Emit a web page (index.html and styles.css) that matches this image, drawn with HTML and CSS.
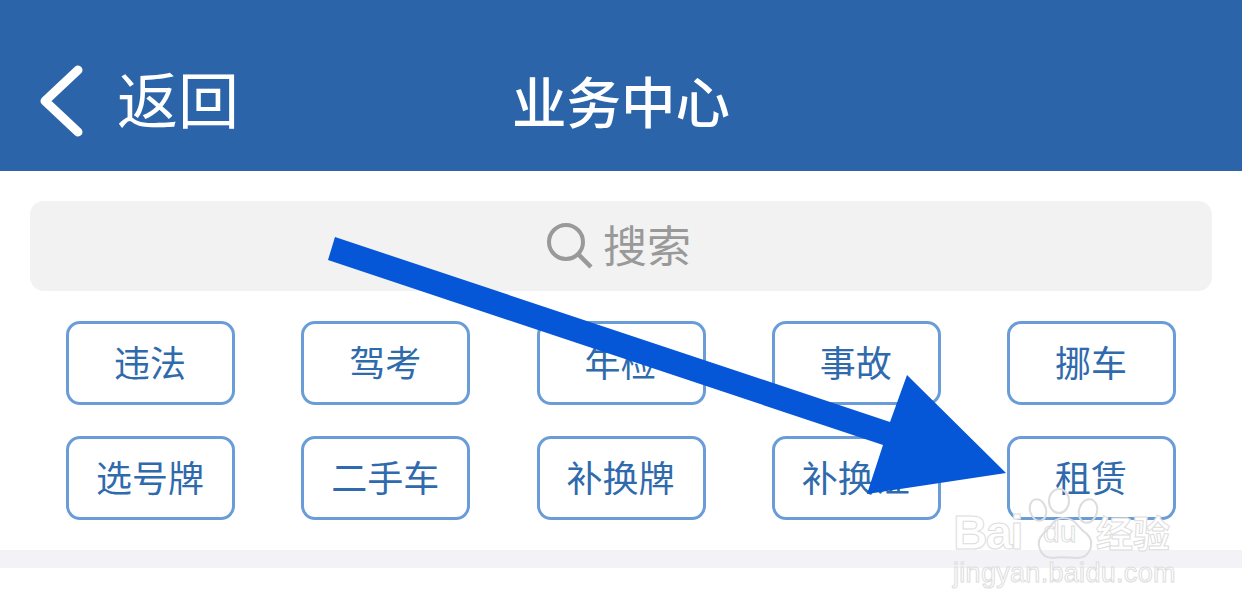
FILE: index.html
```html
<!DOCTYPE html>
<html lang="zh-CN">
<head>
  <meta charset="UTF-8">
  <title>业务中心</title>
  <link rel="stylesheet" href="styles.css">
</head>
<body>
  <div id="page">
    <header class="topbar">
      <div class="back">
        <svg class="back-icon" width="44" height="72" viewBox="0 0 44 72">
          <path d="M38 5 L5 36 L38 67" fill="none" stroke="#fff" stroke-width="9" stroke-linecap="round" stroke-linejoin="round"/>
        </svg>
        <span class="back-text">返回</span>
      </div>
      <h1>业务中心</h1>
    </header>

    <div class="search">
      <svg width="46" height="46" viewBox="0 0 46 46">
        <circle cx="19" cy="19" r="17" fill="none" stroke="#999" stroke-width="4"/>
        <path d="M31 31 L44 44" fill="none" stroke="#999" stroke-width="4.5"/>
      </svg>
      <span class="search-text">搜索</span>
    </div>

    <div class="tags">
      <a class="tag">违法</a>
      <a class="tag">驾考</a>
      <a class="tag">年检</a>
      <a class="tag">事故</a>
      <a class="tag">挪车</a>
      <a class="tag">选号牌</a>
      <a class="tag">二手车</a>
      <a class="tag">补换牌</a>
      <a class="tag">补换证</a>
      <a class="tag">租赁</a>
    </div>

    <div class="divider"></div>

    <!-- annotation drawn over the screenshot -->
    <svg class="arrow" width="1242" height="616" viewBox="0 0 1242 616">
      <polygon points="335,237 328,260 883,445 867,494 1006,473 907,375 890,422" fill="#0656d8"/>
    </svg>

    <div class="watermark">
      <svg class="paw" width="76" height="76" viewBox="0 0 76 76">
        <g fill="none" stroke="#ddd" stroke-width="2">
          <ellipse cx="11" cy="22" rx="8" ry="11" transform="rotate(-15 11 22)"/>
          <ellipse cx="32" cy="13" rx="10" ry="12"/>
          <ellipse cx="61" cy="23" rx="9" ry="12" transform="rotate(15 61 23)"/>
          <path d="M36 30 C50 30 50 40 60 46 C68 54 64 70 50 70 C42 70 34 68 26 70 C12 70 8 54 16 46 C24 40 26 30 36 30 Z"/>
        </g>
      </svg>
      <div class="wm-brand"><span class="wm-bai">Bai</span><span class="wm-du">du</span><span class="wm-cn">经验</span></div>
      <div class="wm-url">jingyan.baidu.com</div>
    </div>
  </div>
</body>
</html>
```

FILE: styles.css
```css
* {
  box-sizing: border-box;
}
html, body {
  margin: 0;
  background: #fff;
  overflow: hidden;
}
#page {
  position: relative;
  width: 1242px;
  height: 616px;
  font-family: "Noto Sans CJK SC", "Liberation Sans", sans-serif;
}
.topbar {
  display: grid;
  grid-template-columns: 1fr auto 1fr;
  align-items: center;
  height: 171px;
  padding: 33px 0 0 40px;
  background: #2b64a8;
  color: #fff;
}
.topbar h1 {
  margin: 0 0 5px;
  font-size: 54.5px;
  font-weight: 500;
  line-height: 72px;
  transform: translateX(-20px);
}
.back {
  display: flex;
  align-items: center;
  gap: 33px;
  font-size: 61px;
  line-height: 72px;
}
.back-icon {
  margin-top: -2px;
}
.back-text {
  padding-bottom: 8px;
}
.search {
  display: flex;
  align-items: center;
  justify-content: center;
  gap: 10px;
  height: 90px;
  margin: 30px 30px 0;
  padding-right: 4px;
  background: #f2f2f2;
  border-radius: 14px;
  color: #999;
  font-size: 44px;
}
.search-text {
  padding-bottom: 5px;
}
.tags {
  display: grid;
  grid-template-columns: repeat(5, 169px);
  justify-content: space-between;
  row-gap: 31px;
  margin-top: 30px;
  padding: 0 66px;
}
.tag {
  display: flex;
  align-items: center;
  justify-content: center;
  height: 84px;
  padding: 0 1px 5px 0;
  border: 3px solid #6a9dd8;
  border-radius: 14px;
  color: #2f6aad;
  font-size: 36px;
}
.divider {
  height: 18px;
  margin-top: 30px;
  background: #f2f2f7;
}
.arrow {
  position: absolute;
  top: 0;
  left: 0;
}
.watermark {
  position: absolute;
  left: 953px;
  top: 482px;
  width: 226px;
  color: #fff;
  -webkit-text-stroke: 1px #ddd;
}
.paw {
  position: absolute;
  left: 74px;
  top: 6px;
}
.wm-brand {
  display: flex;
  align-items: center;
  height: 76px;
  padding-top: 24px;
  font-family: "Liberation Sans", "Noto Sans CJK SC", sans-serif;
  font-weight: 700;
}
.wm-bai {
  width: 81px;
  font-size: 48px;
  letter-spacing: -2px;
}
.wm-du {
  width: 62px;
  padding-left: 9px;
  font-size: 30px;
  font-weight: 400;
}
.wm-cn {
  font-size: 37px;
  white-space: nowrap;
}
.wm-url {
  margin-top: 0;
  font-family: "Liberation Sans", sans-serif;
  font-size: 27px;
  line-height: 30px;
  letter-spacing: 0.3px;
  white-space: nowrap;
}
```
